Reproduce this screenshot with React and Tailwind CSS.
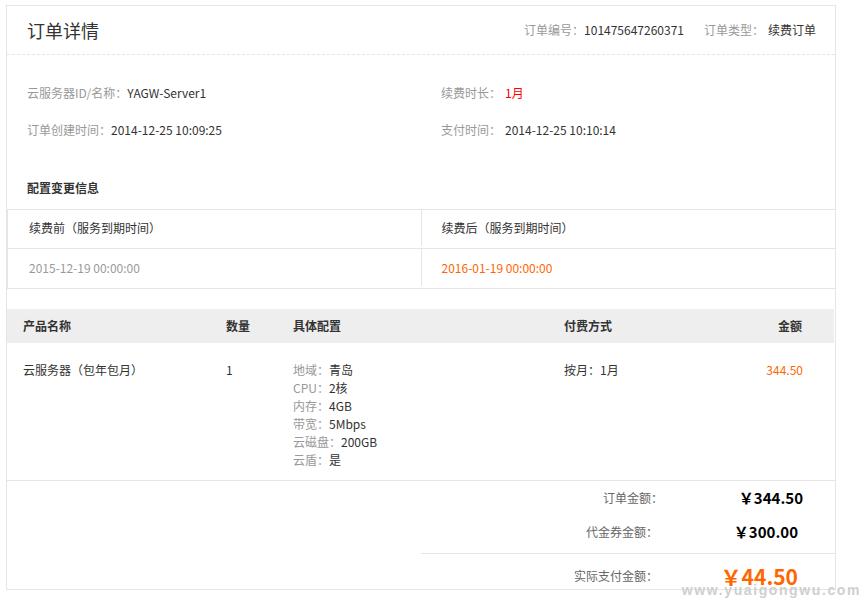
import React from 'react';

const font = { fontFamily: '"Noto Sans CJK SC", "Noto Sans", sans-serif' };

const configs = [
  ['地域', '青岛'],
  ['CPU', '2核'],
  ['内存', '4GB'],
  ['带宽', '5Mbps'],
  ['云磁盘', '200GB'],
  ['云盾', '是'],
];

const App = () => {
  return (
    <div className="relative w-[865px] h-[602px] bg-white overflow-hidden" style={font}>
      <div className="absolute left-[6px] top-[5px] w-[830px] border border-[#e5e5e5] bg-white">
        {/* Header */}
        <div className="h-[49px] flex items-center justify-between pl-[20px] pr-[19px] border-b border-dashed border-[#e5e5e5]">
          <h1 className="text-[18px] leading-[24px] text-[#333] font-normal">订单详情</h1>
          <div className="flex items-center text-[12px] leading-[18px]">
            <span className="text-[#999]">订单编号：</span>
            <span className="text-[#333]">101475647260371</span>
            <span className="text-[#999] ml-[20px]">订单类型： </span>
            <span className="text-[#333] ml-[4px]">续费订单</span>
          </div>
        </div>

        {/* Info */}
        <div className="pt-[19px] text-[12px] leading-[18px]">
          <div className="grid grid-cols-2">
            <div className="h-[37px] flex items-center px-[20px]">
              <span className="text-[#999]">云服务器ID/名称：</span>
              <span className="text-[#333]">YAGW-Server1</span>
            </div>
            <div className="h-[37px] flex items-center px-[20px]">
              <span className="text-[#999]">续费时长：</span>
              <span className="text-[#ff0000] ml-[4px]">1月</span>
            </div>
            <div className="h-[37px] flex items-center px-[20px]">
              <span className="text-[#999]">订单创建时间：</span>
              <span className="text-[#333]">2014-12-25 10:09:25</span>
            </div>
            <div className="h-[37px] flex items-center px-[20px]">
              <span className="text-[#999]">支付时间：</span>
              <span className="text-[#333] ml-[4px]">2014-12-25 10:10:14</span>
            </div>
          </div>
          <div className="mt-[31px] mb-[12px] px-[20px] font-bold text-[#333]">配置变更信息</div>
        </div>

        {/* Change table */}
        <div className="border-y border-l border-[#e5e5e5] text-[12px] leading-[18px]">
          <div className="grid grid-cols-2 h-[39px] pb-[2px] border-b border-[#e5e5e5]">
            <div className="flex items-center px-[21px] border-r border-[#e5e5e5] text-[#333]">续费前（服务到期时间）</div>
            <div className="flex items-center px-[20px] text-[#333]">续费后（服务到期时间）</div>
          </div>
          <div className="grid grid-cols-2 h-[39px] pb-[2px]">
            <div className="flex items-center px-[21px] border-r border-[#e5e5e5] text-[#999]">2015-12-19 00:00:00</div>
            <div className="flex items-center px-[20px] text-[#ff6600]">2016-01-19 00:00:00</div>
          </div>
        </div>

        {/* Product table */}
        <div className="mt-[20px] text-[12px] leading-[18px]">
          <div className="flex items-center h-[34px] pb-[1px] bg-[#eeeeee] font-bold text-[#333] pl-[16px] pr-[32px] mr-[1px]">
            <div className="w-[203px]">产品名称</div>
            <div className="w-[67px]">数量</div>
            <div className="w-[271px]">具体配置</div>
            <div className="flex-1">付费方式</div>
            <div className="text-right">金额</div>
          </div>
          <div className="flex items-start pt-[18px] pb-[11px] pl-[16px] pr-[32px] border-b border-[#e5e5e5]">
            <div className="w-[203px] text-[#333]">云服务器（包年包月）</div>
            <div className="w-[67px] text-[#333]">1</div>
            <div className="w-[271px] flex flex-col">
              {configs.map(([k, v]) => (
                <div key={k}>
                  <span className="text-[#999]">{k}：</span>
                  <span className="text-[#333]">{v}</span>
                </div>
              ))}
            </div>
            <div className="flex-1 text-[#333]">按月：1月</div>
            <div className="text-right text-[#ff6600]">344.50</div>
          </div>
        </div>

        {/* Summary */}
        <div className="text-[12px] leading-[18px]">
          <div className="h-[34px] flex items-center justify-end pr-[32px]">
            <span className="text-[#666]">订单金额：</span>
            <span className="w-[140px] text-right text-[15px] font-bold text-black">￥344.50</span>
          </div>
          <div className="h-[34px] flex items-center justify-end pr-[37px]">
            <span className="text-[#666] mr-[5px]">代金券金额：</span>
            <span className="w-[135px] text-right text-[15px] font-bold text-black">￥300.00</span>
          </div>
          <div className="ml-[414px] mt-[4px] border-t border-[#e5e5e5] h-[36px] flex items-start justify-end pr-[37px] pt-[10px]">
            <span className="text-[#666] mr-[5px] mt-[3px]">实际支付金额：</span>
            <span className="w-[135px] text-right text-[21px] leading-[24px] font-bold text-[#ff6600]">￥44.50</span>
          </div>
        </div>
      </div>

      {/* watermark */}
      <div
        className="absolute right-[4px] top-[582px] text-[14px] leading-[16px] font-bold tracking-[1.6px] text-[#cfcfcf]"
        style={{ fontFamily: '"Liberation Sans", Arial, sans-serif' }}
      >
        www.yuaigongwu.com
      </div>
    </div>
  );
};

export default App;
